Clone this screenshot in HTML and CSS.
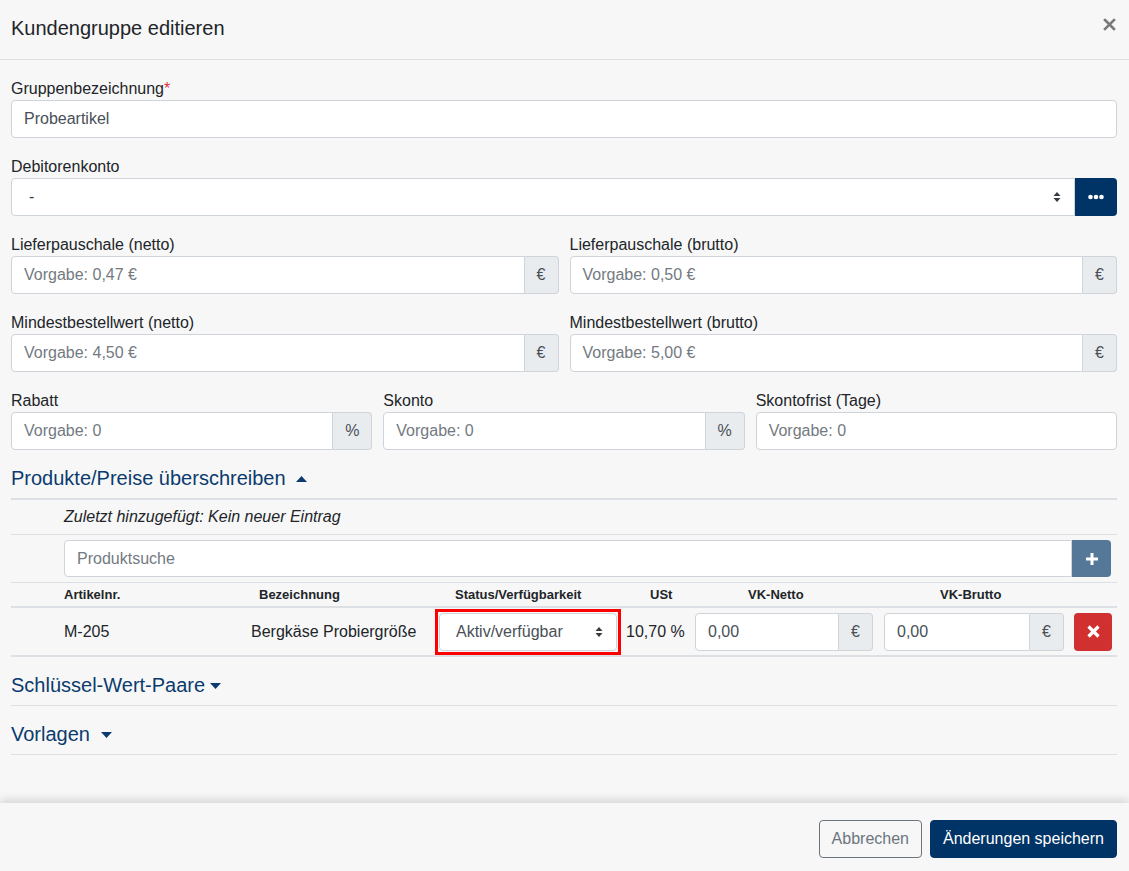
FILE: index.html
```html
<!DOCTYPE html>
<html lang="de">
<head>
<meta charset="utf-8">
<title>Kundengruppe editieren</title>
<link rel="stylesheet" href="styles.css">
</head>
<body>
<div class="modal">
  <div class="modal-header">
    <h1 class="modal-title">Kundengruppe editieren</h1>
    <button class="close" type="button" aria-label="Schließen">
      <svg width="13" height="13" viewBox="0 0 13 13"><path d="M2 2 L11 11 M11 2 L2 11" stroke="#7a7a7a" stroke-width="2.6" stroke-linecap="square"/></svg>
    </button>
  </div>

  <div class="modal-body">
    <div class="form-group">
      <label class="label">Gruppenbezeichnung<span class="req">*</span></label>
      <div class="input">Probeartikel</div>
    </div>

    <div class="form-group">
      <label class="label">Debitorenkonto</label>
      <div class="input-group">
        <div class="input select grow"><span class="dash">-</span>
          <svg class="updown" width="8" height="12" viewBox="0 0 8 12"><path d="M4 1 L7.5 5 H0.5 Z M4 11 L7.5 7 H0.5 Z" fill="#343a40"/></svg>
        </div>
        <button class="btn-navy btn-dots" type="button">
          <svg width="16" height="6" viewBox="0 0 16 6"><circle cx="2.5" cy="3" r="2.3" fill="#fff"/><circle cx="8" cy="3" r="2.3" fill="#fff"/><circle cx="13.5" cy="3" r="2.3" fill="#fff"/></svg>
        </button>
      </div>
    </div>

    <div class="grid2">
      <div class="form-group">
        <label class="label">Lieferpauschale (netto)</label>
        <div class="input-group"><div class="input grow ph">Vorgabe: 0,47 €</div><span class="addon">€</span></div>
      </div>
      <div class="form-group">
        <label class="label">Lieferpauschale (brutto)</label>
        <div class="input-group"><div class="input grow ph">Vorgabe: 0,50 €</div><span class="addon">€</span></div>
      </div>
    </div>

    <div class="grid2">
      <div class="form-group">
        <label class="label">Mindestbestellwert (netto)</label>
        <div class="input-group"><div class="input grow ph">Vorgabe: 4,50 €</div><span class="addon">€</span></div>
      </div>
      <div class="form-group">
        <label class="label">Mindestbestellwert (brutto)</label>
        <div class="input-group"><div class="input grow ph">Vorgabe: 5,00 €</div><span class="addon">€</span></div>
      </div>
    </div>

    <div class="grid3">
      <div class="form-group">
        <label class="label">Rabatt</label>
        <div class="input-group"><div class="input grow ph">Vorgabe: 0</div><span class="addon addon-pct">%</span></div>
      </div>
      <div class="form-group">
        <label class="label">Skonto</label>
        <div class="input-group"><div class="input grow ph">Vorgabe: 0</div><span class="addon addon-pct">%</span></div>
      </div>
      <div class="form-group">
        <label class="label">Skontofrist (Tage)</label>
        <div class="input ph">Vorgabe: 0</div>
      </div>
    </div>

    <h2 class="section section-open">Produkte/Preise überschreiben
      <svg class="caret" width="11" height="6" viewBox="0 0 11 6"><path d="M5.5 0 L11 6 H0 Z" fill="#0b3b6e"/></svg>
    </h2>

    <div class="row-info">Zuletzt hinzugefügt: Kein neuer Eintrag</div>

    <div class="row-search">
      <div class="input-group grow">
        <div class="input grow ph">Produktsuche</div>
        <button class="btn-plus" type="button">
          <svg width="14" height="14" viewBox="0 0 14 14"><path d="M7 1 V13 M1 7 H13" stroke="#fff" stroke-width="3"/></svg>
        </button>
      </div>
    </div>

    <div class="trow thead">
      <span></span>
      <span class="h-art">Artikelnr.</span>
      <span class="h-bez">Bezeichnung</span>
      <span class="h-status">Status/Verfügbarkeit</span>
      <span class="h-ust">USt</span>
      <span class="h-netto">VK-Netto</span>
      <span class="h-brutto">VK-Brutto</span>
      <span></span>
    </div>

    <div class="trow tbody">
      <span></span>
      <span class="d-art">M-205</span>
      <span class="d-bez">Bergkäse Probiergröße</span>
      <span class="d-status">
        <span class="highlight">
          <span class="input select small-select">Aktiv/verfügbar
            <svg class="updown" width="8" height="12" viewBox="0 0 8 12"><path d="M4 1 L7.5 5 H0.5 Z M4 11 L7.5 7 H0.5 Z" fill="#343a40"/></svg>
          </span>
        </span>
      </span>
      <span class="d-ust">10,70 %</span>
      <span class="d-netto"><span class="input-group"><span class="input grow val">0,00</span><span class="addon">€</span></span></span>
      <span class="d-brutto"><span class="input-group"><span class="input grow val">0,00</span><span class="addon">€</span></span></span>
      <span class="d-del">
        <button class="btn-del" type="button">
          <svg width="13" height="13" viewBox="0 0 13 13"><path d="M1.5 1.5 L11.5 11.5 M11.5 1.5 L1.5 11.5" stroke="#fff" stroke-width="3.2"/></svg>
        </button>
      </span>
    </div>

    <h2 class="section">Schlüssel-Wert-Paare<svg class="caret caret-tight" width="11" height="6" viewBox="0 0 11 6"><path d="M0 0 H11 L5.5 6 Z" fill="#0b3b6e"/></svg></h2>
    <h2 class="section">Vorlagen
      <svg class="caret" width="11" height="6" viewBox="0 0 11 6"><path d="M0 0 H11 L5.5 6 Z" fill="#0b3b6e"/></svg>
    </h2>
  </div>

  <div class="modal-footer">
    <button class="btn btn-outline" type="button">Abbrechen</button>
    <button class="btn btn-primary" type="button">Änderungen speichern</button>
  </div>
</div>
</body>
</html>
```

FILE: styles.css
```css
* { box-sizing: border-box; }

html, body {
  margin: 0;
  padding: 0;
  height: 100%;
  background: #f7f7f7;
  font-family: "Liberation Sans", Arial, sans-serif;
  font-size: 16px;
  color: #212529;
}

.modal {
  display: flex;
  flex-direction: column;
  height: 100vh;
  background: #f7f7f7;
}

.modal-header {
  display: flex;
  align-items: flex-start;
  justify-content: space-between;
  height: 60px;
  border-bottom: 1px solid #dcdfe3;
  padding: 13px 13px 0 11px;
  flex: none;
}

.modal-title {
  margin: 0;
  font-size: 20px;
  font-weight: normal;
  line-height: 30px;
  color: #212529;
}

.close {
  border: 0;
  background: none;
  padding: 0;
  margin-top: 5px;
  line-height: 0;
}

.modal-body {
  flex: 1;
  padding: 16px 12px 0 11px;
  overflow: hidden;
}

.form-group { margin-bottom: 16px; }

.label {
  display: block;
  padding-top: 1px;
  line-height: 23px;
  font-size: 16px;
}

.req { color: #dc3545; }

.input {
  display: flex;
  align-items: center;
  height: 38px;
  padding: 0 12px;
  background: #fff;
  border: 1px solid #ced4da;
  border-radius: 4px;
  color: #495057;
  font-size: 16px;
  white-space: nowrap;
}

.ph { color: #737a81; }
.val { color: #495057; }

.grow { flex: 1; min-width: 0; }

.input-group {
  display: flex;
  align-items: stretch;
}

.input-group > .input:not(:last-child) {
  border-top-right-radius: 0;
  border-bottom-right-radius: 0;
}

.addon {
  display: flex;
  align-items: center;
  justify-content: center;
  width: 34px;
  height: 38px;
  background: #e9ecef;
  border: 1px solid #ced4da;
  border-left: 0;
  border-radius: 0 4px 4px 0;
  color: #495057;
  font-size: 16px;
}

.addon-pct { width: 39px; }

.select {
  position: relative;
  justify-content: space-between;
}

.dash { padding-left: 5px; color: #343a40; }

.updown { margin-right: 1px; }

.btn-navy, .btn-dots {
  width: 42px;
  height: 38px;
  border: 0;
  background: #003366;
  border-radius: 0 4px 4px 0;
  display: flex;
  align-items: center;
  justify-content: center;
  padding: 0;
}

.grid2 {
  display: grid;
  grid-template-columns: 1fr 1fr;
  column-gap: 11px;
}

.grid3 {
  display: grid;
  grid-template-columns: 1fr 1fr 1fr;
  column-gap: 11px;
}

.grid3 .form-group { margin-bottom: 0; }

.section {
  margin: 0;
  padding: 16px 0 8px;
  font-size: 20px;
  font-weight: normal;
  line-height: 24px;
  color: #0b3b6e;
  border-bottom: 1px solid #dcdfe3;
}

.section-open { border-bottom-width: 2px; }

.caret {
  margin-left: 5px;
  vertical-align: 3px;
}

.caret-tight { margin-left: 5px; }

.row-info {
  height: 35px;
  padding: 5px 0 0 53px;
  line-height: 24px;
  font-style: italic;
  border-bottom: 1px solid #dcdfe3;
}

.row-search {
  display: flex;
  padding: 5px 6px 0 53px;
  height: 48px;
  border-bottom: 1px solid #dcdfe3;
}

.row-search .input { height: 37px; }

.btn-plus {
  width: 39px;
  height: 37px;
  border: 0;
  padding: 0;
  background: #557899;
  border-radius: 0 4px 4px 0;
  display: flex;
  align-items: center;
  justify-content: center;
}

.trow {
  display: grid;
  grid-template-columns: 41px 188px 189px 193px 68px 189px 190px 48px;
  align-items: center;
}

.thead {
  height: 25px;
  font-size: 13px;
  font-weight: bold;
  border-bottom: 2px solid #dcdfe3;
}

.h-art { padding-left: 12px; }
.h-bez { padding-left: 19px; }
.h-status { padding-left: 26px; }
.h-ust { padding-left: 28px; }
.h-netto { padding-left: 58px; }
.h-brutto { padding-left: 61px; }

.tbody {
  height: 49px;
  border-bottom: 2px solid #dcdfe3;
}

.d-art { padding-left: 12px; }
.d-bez { padding-left: 11px; }
.d-status { padding-left: 6px; }
.d-ust { padding-left: 4px; }
.d-netto { padding: 0 6px 0 5px; }
.d-brutto { padding: 0 5px; }
.d-del { padding-left: 5px; }

.highlight {
  display: block;
  width: 186px;
  height: 46px;
  border: 3px solid #ff0000;
  padding: 1px;
}

.small-select {
  height: 38px;
  padding-left: 16px;
  padding-right: 12px;
}

.btn-del {
  width: 38px;
  height: 38px;
  border: 0;
  padding: 0;
  background: #d03130;
  border-radius: 4px;
  display: flex;
  align-items: center;
  justify-content: center;
}

.modal-footer {
  flex: none;
  height: 68px;
  display: flex;
  justify-content: flex-end;
  align-items: flex-start;
  gap: 8px;
  padding: 17px 12px 0;
  background: #f7f7f7;
  box-shadow: 0 -4px 8px rgba(0, 0, 0, 0.12);
  position: relative;
}

.btn {
  height: 38px;
  padding: 0 12px;
  font-family: "Liberation Sans", Arial, sans-serif;
  font-size: 16px;
  border-radius: 4px;
}

.btn-outline {
  background: transparent;
  border: 1px solid #6c757d;
  color: #6c757d;
}

.btn-primary {
  background: #003366;
  border: 1px solid #003366;
  color: #fff;
}
```
